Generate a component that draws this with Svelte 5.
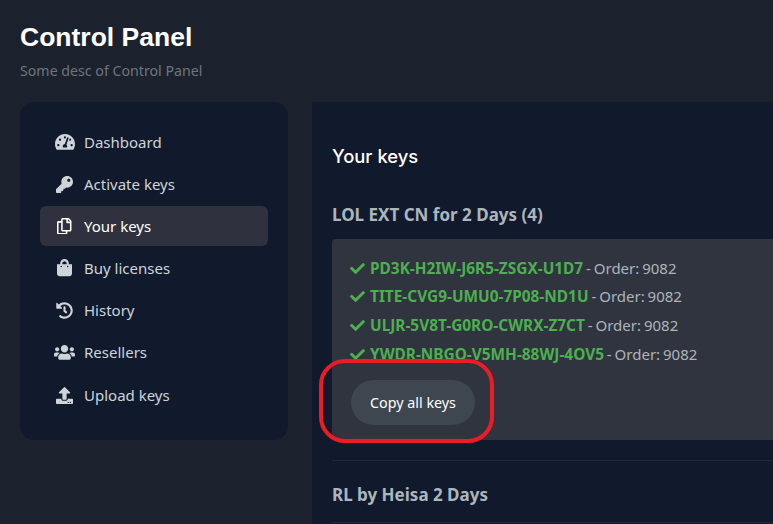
<script>
  const nav = [
    { label: 'Dashboard', vb: '0 0 576 512', w: 20, d: 'M288 32C128.94 32 0 160.94 0 320c0 52.8 14.25 102.26 39.06 144.8 5.61 9.62 16.3 15.2 27.44 15.2h443c11.14 0 21.83-5.58 27.44-15.2C561.75 422.26 576 372.8 576 320c0-159.06-128.94-288-288-288zm0 64c14.71 0 26.58 10.13 30.32 23.65-1.11 2.26-2.64 4.23-3.45 6.67l-9.22 27.67c-5.13 3.49-10.97 6.01-17.64 6.01-17.67 0-32-14.33-32-32S270.33 96 288 96zM96 384c-17.67 0-32-14.33-32-32s14.33-32 32-32 32 14.33 32 32-14.33 32-32 32zm48-160c-17.67 0-32-14.33-32-32s14.33-32 32-32 32 14.33 32 32-14.33 32-32 32zm246.77-72.41l-61.33 184C343.13 347.33 352 364.54 352 384c0 11.72-3.38 22.55-8.88 32H232.88c-5.5-9.45-8.88-20.28-8.88-32 0-33.94 26.5-61.43 59.9-63.59l61.34-184.01c4.17-12.56 17.73-19.45 30.36-15.17 12.57 4.19 19.35 17.79 15.17 30.36zm14.66 57.2l15.52-46.55c3.47-1.29 7.13-2.23 11.05-2.23 17.67 0 32 14.33 32 32s-14.33 32-32 32c-11.38 0-20.89-6.28-26.57-15.22zM480 384c-17.67 0-32-14.33-32-32s14.33-32 32-32 32 14.33 32 32-14.33 32-32 32z' },
    { label: 'Activate keys', vb: '0 0 512 512', w: 17, d: 'M512 176.001C512 273.203 433.202 352 336 352c-11.22 0-22.19-1.062-32.827-3.069l-24.012 27.014A23.999 23.999 0 0 1 261.223 384H224v40c0 13.255-10.745 24-24 24h-40v40c0 13.255-10.745 24-24 24H24c-13.255 0-24-10.745-24-24v-78.059c0-6.365 2.529-12.47 7.029-16.971l161.802-161.802C163.108 213.814 160 195.271 160 176 160 78.798 238.797.001 335.999 0 433.488-.001 512 78.511 512 176.001zM336 128c0 26.51 21.49 48 48 48s48-21.49 48-48-21.49-48-48-48-48 21.49-48 48z' },
    { label: 'Your keys', vb: '0 0 448 512', w: 14.5, active: true, d: 'M433.941 65.941l-51.882-51.882A48 48 0 0 0 348.118 0H176c-26.51 0-48 21.49-48 48v48H48c-26.51 0-48 21.49-48 48v320c0 26.51 21.49 48 48 48h224c26.51 0 48-21.49 48-48v-48h80c26.51 0 48-21.49 48-48V99.882a48 48 0 0 0-14.059-33.941zM266 464H54a6 6 0 0 1-6-6V150a6 6 0 0 1 6-6h74v224c0 26.51 21.49 48 48 48h96v42a6 6 0 0 1-6 6zm128-96H182a6 6 0 0 1-6-6V54a6 6 0 0 1 6-6h106v88c0 13.255 10.745 24 24 24h88v202a6 6 0 0 1-6 6zm6-256h-64V48h9.632c1.591 0 3.117.632 4.243 1.757l48.368 48.368a6 6 0 0 1 1.757 4.243V112z' },
    { label: 'Buy licenses', vb: '0 0 448 512', w: 15, d: 'M352 160v-32C352 57.42 294.579 0 224 0 153.42 0 96 57.42 96 128v32H0v272c0 44.183 35.817 80 80 80h288c44.183 0 80-35.817 80-80V160h-96zm-192-32c0-35.29 28.71-64 64-64s64 28.71 64 64v32H160v-32zm160 120c-13.255 0-24-10.745-24-24s10.745-24 24-24 24 10.745 24 24-10.745 24-24 24zm-192 0c-13.255 0-24-10.745-24-24s10.745-24 24-24 24 10.745 24 24-10.745 24-24 24z' },
    { label: 'History', vb: '0 0 512 512', w: 17, d: 'M504 255.531c.253 136.64-111.18 248.372-247.82 248.468-59.015.042-113.223-20.53-155.822-54.911-11.077-8.94-11.905-25.541-1.839-35.607l11.267-11.267c8.609-8.609 22.353-9.551 31.891-1.984C173.062 425.135 212.781 440 256 440c101.705 0 184-82.311 184-184 0-101.705-82.311-184-184-184-48.814 0-93.149 18.969-126.068 49.932l50.754 50.754c10.08 10.08 2.941 27.314-11.313 27.314H24c-8.837 0-16-7.163-16-16V38.627c0-14.254 17.234-21.393 27.314-11.314l49.372 49.372C129.209 34.136 189.552 8 256 8c136.81 0 247.747 110.78 248 247.531zm-180.912 78.784l9.823-12.63c8.138-10.463 6.253-25.542-4.21-33.679L288 256.349V152c0-13.255-10.745-24-24-24h-16c-13.255 0-24 10.745-24 24v135.651l65.409 50.874c10.463 8.137 25.541 6.253 33.679-4.21z' },
    { label: 'Resellers', vb: '0 0 640 512', w: 21, d: 'M96 224c35.3 0 64-28.7 64-64s-28.7-64-64-64-64 28.7-64 64 28.7 64 64 64zm448 0c35.3 0 64-28.7 64-64s-28.7-64-64-64-64 28.7-64 64 28.7 64 64 64zm32 32h-64c-17.6 0-33.5 7.1-45.1 18.6 40.3 22.1 68.9 62 75.1 109.4h66c17.7 0 32-14.3 32-32v-32c0-35.3-28.7-64-64-64zm-256 0c61.9 0 112-50.1 112-112S381.9 32 320 32 208 82.1 208 144s50.1 112 112 112zm76.8 32h-8.3c-20.8 10-43.9 16-68.5 16s-47.6-6-68.5-16h-8.3C179.6 288 128 339.6 128 403.2V432c0 26.5 21.5 48 48 48h288c26.5 0 48-21.5 48-48v-28.8c0-63.6-51.6-115.2-115.2-115.2zm-223.7-13.4C161.5 263.1 145.6 256 128 256H64c-35.3 0-64 28.7-64 64v32c0 17.7 14.3 32 32 32h65.9c6.3-47.4 34.9-87.3 75.2-109.4z' },
    { label: 'Upload keys', vb: '0 0 512 512', w: 17, d: 'M296 384h-80c-13.3 0-24-10.7-24-24V192h-87.7c-17.8 0-26.7-21.5-14.1-34.1L242.3 5.7c7.5-7.5 19.8-7.5 27.3 0l152.2 152.2c12.6 12.6 3.7 34.1-14.1 34.1H320v168c0 13.3-10.7 24-24 24zm216-8v112c0 13.3-10.7 24-24 24H24c-13.3 0-24-10.7-24-24V376c0-13.3 10.7-24 24-24h136v8c0 30.9 25.1 56 56 56h80c30.9 0 56-25.1 56-56v-8h136c13.3 0 24 10.7 24 24zm-124 88c0-11-9-20-20-20s-20 9-20 20 9 20 20 20 20-9 20-20zm64 0c0-11-9-20-20-20s-20 9-20 20 9 20 20 20 20-9 20-20z' }
  ];

  const keys = [
    'PD3K-H2IW-J6R5-ZSGX-U1D7',
    'TITE-CVG9-UMU0-7P08-ND1U',
    'ULJR-5V8T-G0RO-CWRX-Z7CT',
    'YWDR-NBGO-V5MH-88WJ-4OV5'
  ];

  const checkPath = 'M173.898 439.404l-166.4-166.4c-9.997-9.997-9.997-26.206 0-36.204l36.203-36.204c9.997-10 26.207-10 36.204 0L192 312.69 432.095 72.596c9.997-9.997 26.207-9.997 36.204 0l36.203 36.204c9.997 9.997 9.997 26.206 0 36.204l-294.4 294.401c-9.998 9.997-26.207 9.997-36.204-.001z';
</script>

<div class="page">
  <header class="header">
    <h1>Control Panel</h1>
    <p>Some desc of Control Panel</p>
  </header>

  <div class="columns">
    <nav class="sidebar">
      {#each nav as item}
        <a class="nav-item" class:active={item.active} href="#top">
          <span class="nav-icon">
            <svg viewBox={item.vb} style="width: {item.w}px"><path d={item.d} /></svg>
          </span>
          {item.label}
        </a>
      {/each}
    </nav>

    <main class="content">
      <h2>Your keys</h2>

      <section class="group">
        <h3>LOL EXT CN for 2 Days (4)</h3>
        <div class="card">
          <ul>
            {#each keys as key}
              <li><svg class="check" viewBox="0 0 512 512"><path d={checkPath} /></svg><strong>{key}</strong> - Order: 9082</li>
            {/each}
          </ul>
          <div class="copy-wrap">
            <button class="copy">Copy all keys</button>
            <span class="highlight"></span>
          </div>
        </div>
      </section>

      <section class="group next">
        <h3>RL by Heisa 2 Days</h3>
      </section>
    </main>
  </div>
</div>

<style>
  :global(body) {
    background: #1c222d;
  }

  .page {
    width: 773px;
    height: 524px;
    overflow: hidden;
    font-family: "Noto Sans", sans-serif;
  }

  .header {
    padding: 20px 20px 0;
    height: 102px;
    box-sizing: border-box;
  }

  h1 {
    margin: 0;
    font-family: "Liberation Sans", Arial, sans-serif;
    font-size: 26.5px;
    line-height: 34px;
    font-weight: 700;
    color: #fff;
  }

  .header p {
    margin: 7px 0 0;
    font-size: 14.2px;
    line-height: 20px;
    color: #6c757d;
  }

  .columns {
    display: flex;
    gap: 24px;
    padding-left: 20px;
  }

  .sidebar {
    width: 268px;
    height: 338px;
    flex: none;
    box-sizing: border-box;
    padding: 20px 20px 25px;
    background: #111a2c;
    border-radius: 14px;
    display: flex;
    flex-direction: column;
    gap: 2px;
  }

  .nav-item {
    height: 40px;
    display: flex;
    align-items: center;
    border-radius: 6px;
    font-size: 15px;
    color: #ced4da;
    text-decoration: none;
  }

  .nav-item:last-child {
    margin-top: 1px;
  }

  .nav-item.active {
    background: #2f323e;
    color: #fff;
  }

  .nav-icon {
    width: 44px;
    padding-left: 5px;
    box-sizing: border-box;
    display: flex;
    justify-content: center;
    flex: none;
  }

  .nav-icon svg {
    display: block;
    fill: currentColor;
  }

  .content {
    width: 480px;
    height: 422px;
    flex: none;
    box-sizing: border-box;
    padding: 20px;
    background: #111a2c;
  }

  h2 {
    margin: 22px 0 0;
    font-family: Inter, sans-serif;
    font-size: 18.4px;
    line-height: 24px;
    font-weight: 500;
    color: #fff;
  }

  h3 {
    margin: 0;
    font-size: 17px;
    line-height: 22px;
    font-weight: 700;
    color: #adb5bd;
  }

  .group {
    margin-top: 36px;
  }

  .group.next {
    margin-top: 20px;
    padding-top: 23px;
    border-top: 1px solid #1f2a3d;
    padding-bottom: 16px;
    border-bottom: 1px solid #1f2a3d;
  }

  .card {
    margin-top: 13px;
    width: 500px;
    height: 201px;
    box-sizing: border-box;
    padding: 14.6px 18px;
    background: #30343e;
    border-radius: 4px 0 0 4px;
  }

  ul {
    margin: 0;
    padding: 0;
    list-style: none;
  }

  li {
    height: 28.67px;
    line-height: 28.67px;
    font-size: 15px;
    color: #adb5bd;
    word-spacing: -1px;
    white-space: nowrap;
  }

  .check {
    width: 15px;
    height: 15px;
    margin-right: 5px;
    vertical-align: -2px;
    fill: #4caf50;
  }

  strong {
    font-size: 15.4px;
    font-weight: 700;
    color: #4caf50;
  }

  .copy-wrap {
    position: relative;
    margin: 11.4px 0 0 1px;
    width: 124px;
  }

  .copy {
    display: block;
    width: 124px;
    height: 45px;
    padding: 0;
    border: none;
    border-radius: 23px;
    background: #3e4650;
    color: #fff;
    font-family: inherit;
    font-size: 14.3px;
  }

  .highlight {
    position: absolute;
    left: -32px;
    top: -21px;
    width: 167px;
    height: 76px;
    border: 4px solid #ed1c24;
    border-radius: 26px;
  }
</style>
